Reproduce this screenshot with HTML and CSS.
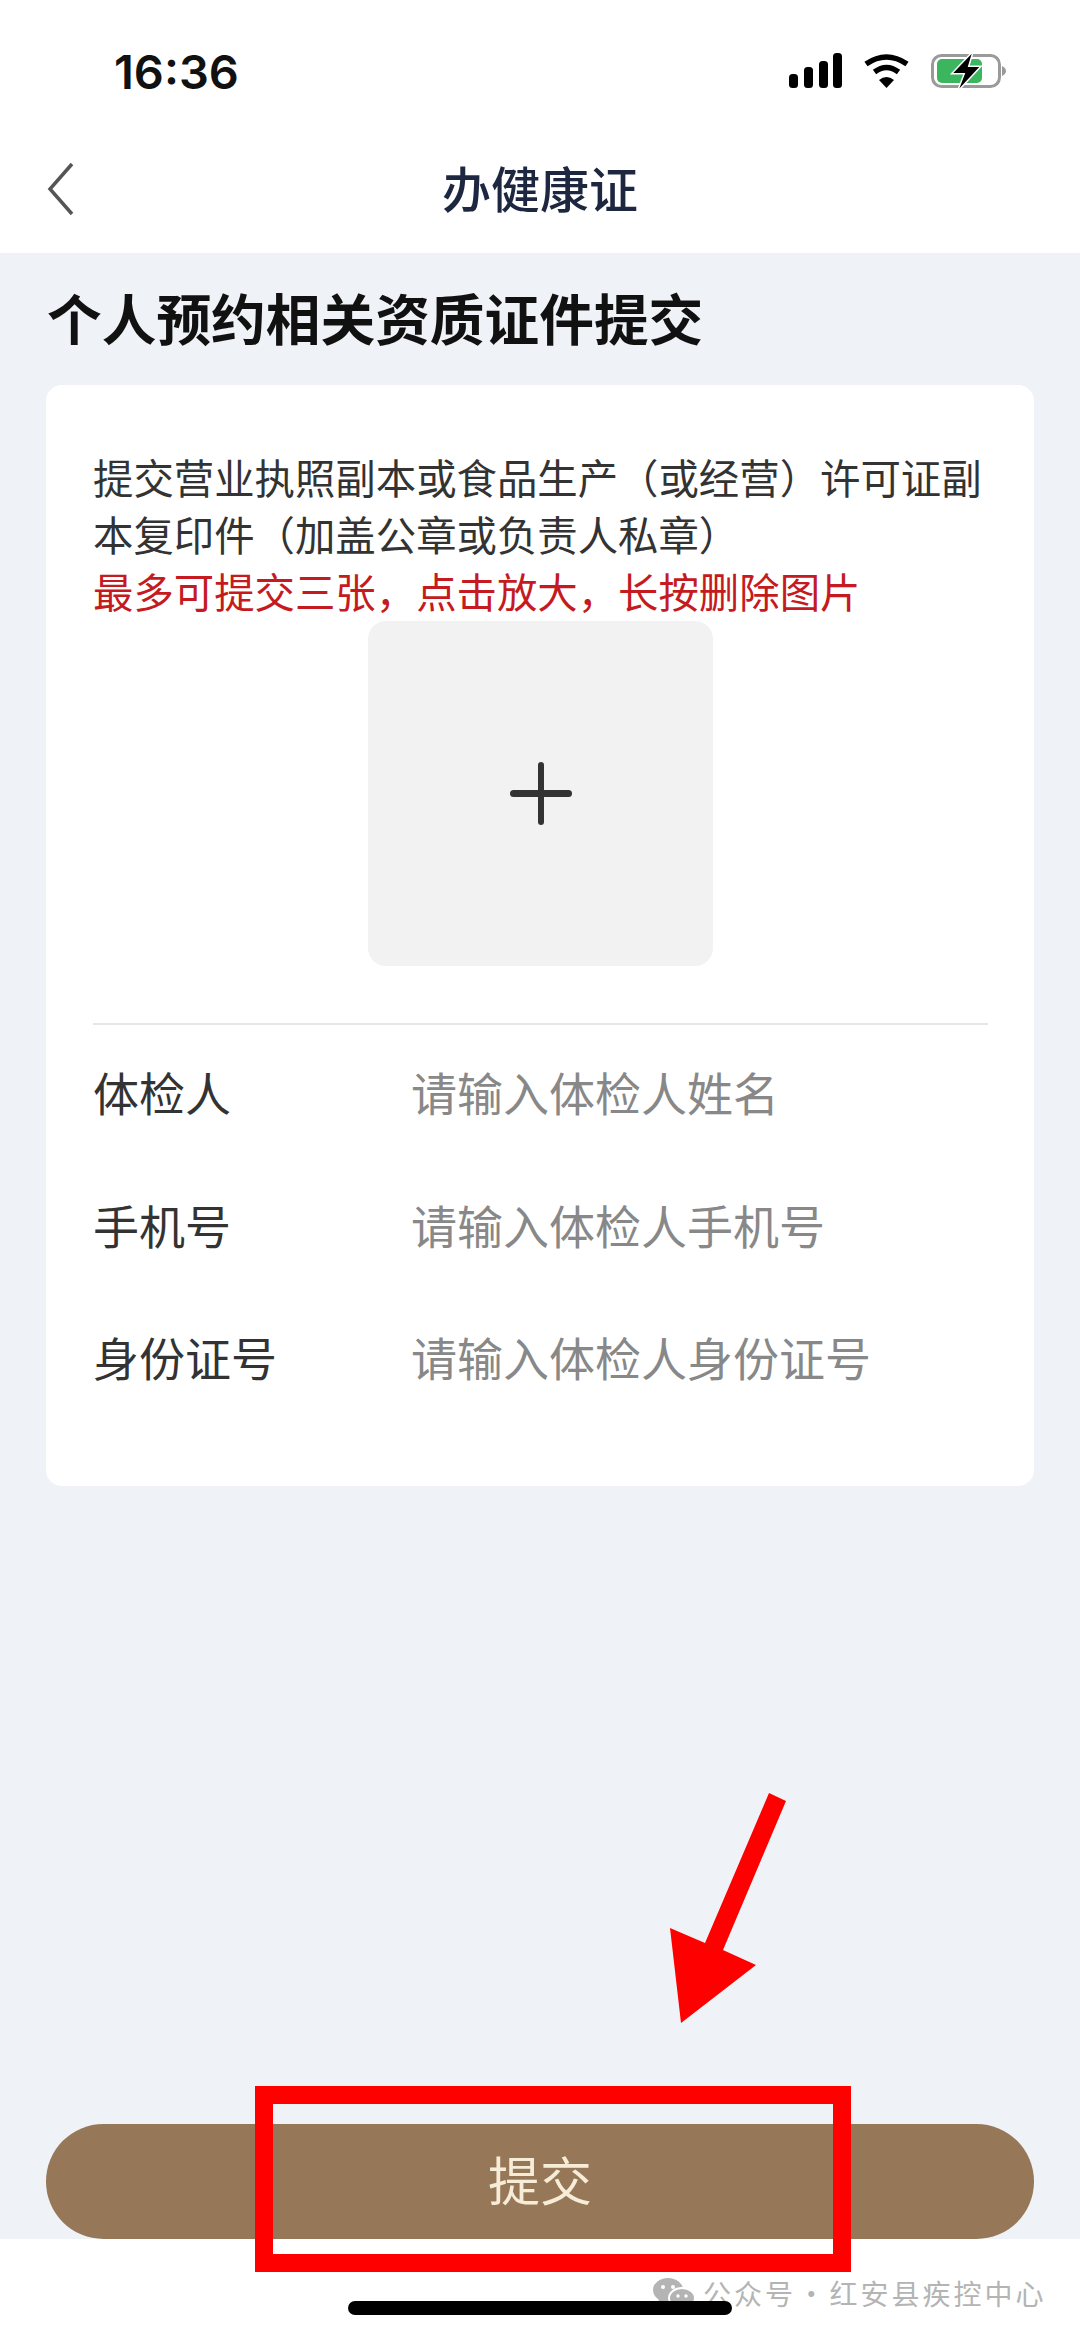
FILE: index.html
```html
<!DOCTYPE html>
<html lang="zh-CN">
<head>
<meta charset="utf-8">
<title>办健康证</title>
<link rel="stylesheet" href="styles.css">
</head>
<body>
<div class="page">
  <header class="top">
    <div class="status">
      <span class="time">16:36</span>
      <div class="status-icons">
        <svg class="signal" width="53" height="35" viewBox="0 0 53 35"><rect x="0" y="21" width="9" height="14" rx="3.5"/><rect x="15" y="14" width="9" height="21" rx="3.5"/><rect x="30" y="8" width="9" height="27" rx="3.5"/><rect x="44" y="0" width="9" height="35" rx="3.5"/></svg>
        <svg class="wifi" width="47" height="35" viewBox="0 0 47 35"><path d="M3 11Q23.500 -3 44 11" fill="none" stroke="#000" stroke-width="5.500"/><path d="M11.500 19Q23.500 10 35.500 19" fill="none" stroke="#000" stroke-width="5.500"/><path d="M16 27Q23.500 21 31 27L23.500 35Z"/></svg>
        <svg class="battery" width="76" height="36" viewBox="0 0 76 36"><rect x="1.500" y="2.500" width="67" height="31" rx="9" fill="none" stroke="#9a9a9a" stroke-width="3"/><rect x="6" y="6" width="45" height="24" rx="5" fill="#3cb55f"/><path d="M71 13Q75 15 75 18Q75 21 71 23Z" fill="#9a9a9a"/><path class="bolt" d="M40.700 .7L22.300 20H34.300L28.300 35.500L48.300 14H36.700Z"/></svg>
      </div>
    </div>
    <div class="nav">
      <svg class="back" width="28" height="54" viewBox="0 0 28 54"><path d="M25 2L3 27L25 52" fill="none" stroke="#555" stroke-width="3.500"/></svg>
      <h1 class="nav-title">办健康证</h1>
    </div>
  </header>
  <main class="main">
    <h2 class="heading">个人预约相关资质证件提交</h2>
    <section class="card">
      <p class="intro">提交营业执照副本或食品生产（或经营）许可证副本复印件（加盖公章或负责人私章）</p>
      <p class="notice">最多可提交三张，点击放大，长按删除图片</p>
      <div class="upload"><span class="plus"></span></div>
      <div class="divider"></div>
      <div class="row"><span class="label">体检人</span><span class="hint">请输入体检人姓名</span></div>
      <div class="row"><span class="label">手机号</span><span class="hint">请输入体检人手机号</span></div>
      <div class="row"><span class="label">身份证号</span><span class="hint">请输入体检人身份证号</span></div>
    </section>
    <button class="submit" type="button">提交</button>
  </main>
  <footer class="foot"></footer>

  <svg class="markup" width="1080" height="2337" viewBox="0 0 1080 2337">
    <polygon points="769,1793 786,1801 723,1950 756,1965 681,2023 670,1928 705,1943" fill="#ff0000"/>
    <rect x="264" y="2095" width="578" height="168" fill="none" stroke="#ff0000" stroke-width="18"/>
  </svg>
  <div class="watermark">
    <svg class="wechat" width="42" height="30" viewBox="0 0 42 30"><ellipse cx="15" cy="12" rx="15" ry="12" fill="#b4b4b4"/><path d="M6 19L5 27L13 22Z" fill="#b4b4b4"/><ellipse cx="29" cy="20" rx="13" ry="10" fill="#b4b4b4" stroke="#fff" stroke-width="2"/><circle cx="10" cy="9" r="2" fill="#fff"/><circle cx="20" cy="9" r="2" fill="#fff"/><circle cx="25" cy="18" r="1.700" fill="#fff"/><circle cx="33" cy="18" r="1.700" fill="#fff"/></svg>
    <span class="wm-text">公众号 · 红安县疾控中心</span>
  </div>
  <div class="home-bar"></div>
</div>
</body>
</html>
```
FILE: styles.css
```css
* { box-sizing: border-box; }
html, body { margin: 0; padding: 0; }
body { font-family: "Noto Sans CJK SC", "Noto Sans", sans-serif; background: #eff3f8; }
.page { position: relative; width: 1080px; height: 2337px; display: flex; flex-direction: column; overflow: hidden; }

.top { height: 253px; background: #fff; flex: none; }
.status { height: 120px; display: flex; justify-content: space-between; align-items: flex-start; padding: 53px 73px 0 114px; }
.time { font-family: Inter, "Liberation Sans", sans-serif; font-weight: 600; font-size: 47px; line-height: 38px; color: #111; }
.status-icons { display: flex; align-items: flex-start; gap: 21px; }
.signal, .wifi { display: block; }
.battery { display: block; margin-left: 0; }
.bolt { fill: #000; stroke: #fff; stroke-width: 3; paint-order: stroke; }

.nav { position: relative; height: 133px; display: flex; align-items: center; justify-content: center; }
.back { position: absolute; left: 47px; top: 42px; }
.nav-title { margin: 0; font-size: 49px; font-weight: 500; line-height: 60px; color: #1d2740; }

.main { flex: 1; min-height: 0; display: flex; flex-direction: column; padding: 35px 46px 0 46px; }
.heading { margin: 0 0 39px 1px; font-size: 54.700px; font-weight: 700; line-height: 58px; color: #111; }
.card { background: #fff; border-radius: 16px; padding: 63px 46px 63px 47px; }
.intro, .notice { margin: 0; font-size: 40.400px; line-height: 57px; }
.intro { color: #333; }
.notice { color: #c41a20; }
.upload { width: 345px; height: 345px; margin: 2px auto 0; border-radius: 18px; background: #f2f2f2; position: relative; display: flex; align-items: center; justify-content: center; }
.plus { position: relative; width: 62px; height: 63px; display: block; }
.plus::before, .plus::after { content: ""; position: absolute; background: #333; border-radius: 4px; }
.plus::before { left: 0; right: 0; top: 28px; height: 7px; }
.plus::after { top: 0; bottom: 0; left: 28px; width: 6px; }
.divider { height: 2px; background: #e6e6e6; margin-top: 57px; }
.row { height: 132.500px; display: flex; align-items: center; font-size: 46px; line-height: 60px; }
.label { width: 318px; color: #333; flex: none; }
.hint { color: #888; }

.submit { margin-top: auto; height: 115px; width: 988px; flex: none; border: 0; padding: 0 0 5px; border-radius: 58px; background: #967757; color: #f6ecd8; font-family: inherit; font-size: 52px; line-height: 60px; }
.foot { height: 98px; background: #fff; flex: none; }

.markup { position: absolute; left: 0; top: 0; pointer-events: none; }
.watermark { position: absolute; left: 653px; top: 2275px; display: flex; align-items: center; gap: 8px; }
.wechat { display: block; }
.wm-text { font-size: 28px; line-height: 36px; letter-spacing: 3px; word-spacing: -8px; color: #b4b4b4; white-space: nowrap; }
.home-bar { position: absolute; left: 348px; top: 2301px; width: 384px; height: 14px; border-radius: 7px; background: #000; }
```
